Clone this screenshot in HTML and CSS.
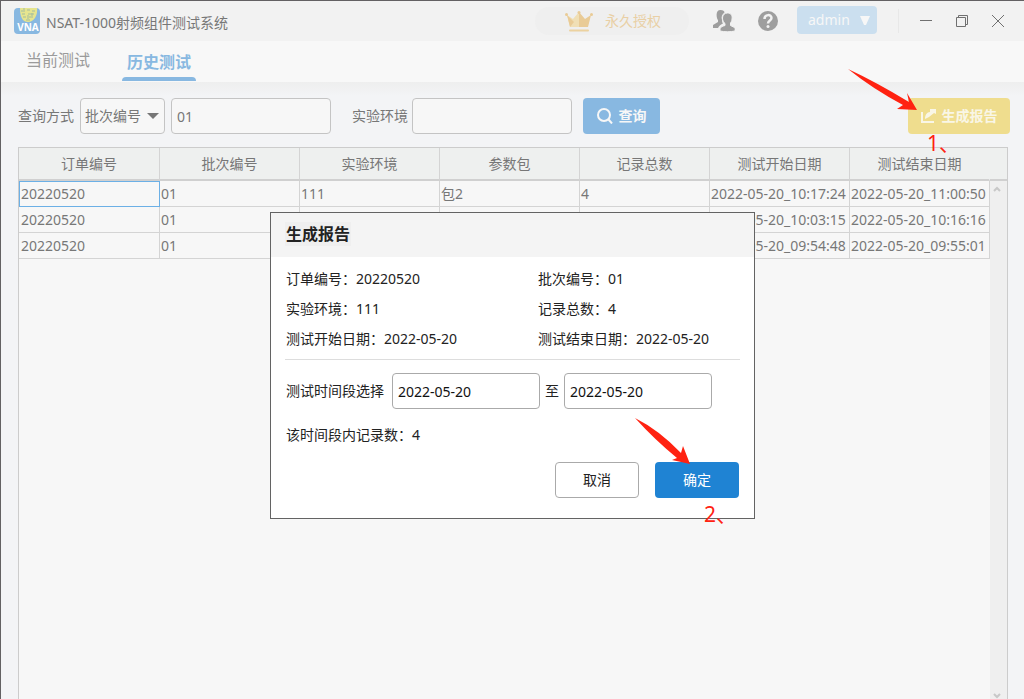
FILE: index.html
```html
<!DOCTYPE html>
<html lang="zh-CN">
<head>
<meta charset="utf-8">
<title>NSAT-1000射频组件测试系统</title>
<link rel="stylesheet" href="styles.css">
</head>
<body>
<div class="window">
  <header class="titlebar">
    <svg class="logo" width="26" height="26" viewBox="0 0 26 26" aria-hidden="true">
      <rect width="26" height="26" rx="4" fill="#88b8e1"/>
      <path d="M6 0h17c1 7-3 14-9 14S6 8 6 0z" fill="#e6e58f"/>
      <path d="M7 3h4M13 2h3M18 3h3M8 6h3M14 6h6M9 9h3M15 9h4M12 12h4M10 0v2M18 5v3M14 7v4" stroke="#a3bd9f" stroke-width="1" fill="none"/>
      <text class="logo-text" x="14" y="23" text-anchor="middle">VNA</text>
    </svg>
    <h1 class="app-name">NSAT-1000射频组件测试系统</h1>
    <div class="license">
      <svg width="28" height="21" viewBox="0 0 28 21" aria-hidden="true">
        <path d="M2 4l6 4 6-7v15H5z" fill="#f0dfb5"/>
        <path d="M26 4l-6 4-6-7v15h9z" fill="#e9cb96"/>
        <path d="M2 4l7 7-4 5z" fill="#e9cb96"/>
        <circle cx="1.500" cy="3.500" r="1.500" fill="#e9cb96"/><circle cx="14" cy="1.500" r="1.500" fill="#e9cb96"/><circle cx="26.500" cy="3.500" r="1.500" fill="#e9cb96"/>
        <path d="M5 19.500h18" stroke="#ecd2a0" stroke-width="2" stroke-linecap="round"/>
      </svg>
      <span>永久授权</span>
    </div>
    <button class="icon-button users" aria-label="用户">
      <svg width="22" height="22" viewBox="0 0 22 22" fill="#9e9e9e" aria-hidden="true">
        <path d="M7.500 0c2.500 0 4 1 4 2.500C9 4 8 7 9 10c0 2 .5 3 1 3.500-2 1-4 2-5 4.500H0v-3l5-3v-2C3.500 8.500 2 0 7.500 0z"/>
        <path d="M14.500 3c4 0 5 3 4.500 6 0 2-1 3-1.500 4v2.500l4 2c1 1 .5 3 .5 3.500-4 1-11 1-15 0 0-3 0-4 5-5.500v-2c-1.500-1-2.500-3-2.500-5.500 0-3 2-5 5-5z" stroke="#f2f2f2"/>
      </svg>
    </button>
    <button class="icon-button help" aria-label="帮助">
      <svg width="20" height="20" viewBox="0 0 20 20" aria-hidden="true">
        <circle cx="10" cy="10" r="10" fill="#9e9e9e"/>
        <path d="M6.500 8c0-5 7-5 7-1 0 2.500-3.500 2.500-3.500 5.500" fill="none" stroke="#f2f2f2" stroke-width="2.500"/>
        <circle cx="10" cy="15.500" r="1.500" fill="#f2f2f2"/>
      </svg>
    </button>
    <button class="account">admin
      <svg width="10" height="9" viewBox="0 0 10 9" fill="#f7f7f7" aria-hidden="true"><path d="M0 0h10L6 9H4z"/></svg>
    </button>
    <div class="window-controls">
      <button class="icon-button" aria-label="最小化"><svg width="12" height="12" viewBox="0 0 12 12" aria-hidden="true"><path d="M0 5.500h12"/></svg></button>
      <button class="icon-button" aria-label="还原"><svg width="12" height="12" viewBox="0 0 12 12" aria-hidden="true"><path d="M.5 2.500h9v9h-9zM2.500 2.500v-2h9v9h-2"/></svg></button>
      <button class="icon-button" aria-label="关闭"><svg width="12" height="12" viewBox="0 0 12 12" aria-hidden="true"><path d="M0 0l12 12M12 0L0 12"/></svg></button>
    </div>
  </header>

  <nav class="tabs">
    <button class="tab">当前测试</button>
    <button class="tab tab-active">历史测试</button>
  </nav>

  <main class="content">
    <form class="search">
      <label for="mode">查询方式</label>
      <div class="select-box">
        <select id="mode"><option>批次编号</option></select>
        <svg class="select-arrow" width="12" height="6" viewBox="0 0 12 6" aria-hidden="true"><path d="M0 0h12L6 6z" fill="#777"/></svg>
      </div>
      <input class="field keyword" type="text" value="01" aria-label="查询内容">
      <label for="env">实验环境</label>
      <input class="field environment" id="env" type="text">
      <button class="button query" type="button">
        <svg width="16" height="16" viewBox="0 0 16 16" fill="none" stroke="#f7f7f7" stroke-width="2" aria-hidden="true"><circle cx="7" cy="7" r="6"/><path d="M11.500 11.500L15 15.500"/></svg>
        查询
      </button>
      <div class="marked report-box">
        <button class="button report" type="button">
          <svg width="15" height="14" viewBox="0 0 15 14" aria-hidden="true"><path d="M1 3v10h12" fill="none" stroke="#f9f6e6" stroke-width="2"/><path d="M9 0h6v5l-2-1-5 4-4 2c0-4 2-7 5-7z" fill="#f9f6e6"/></svg>
          生成报告
        </button>
        <svg class="arrow arrow-report" width="69" height="43" viewBox="0 0 69 43" aria-hidden="true"><path d="M0 0Q28 13 61 33l-2-9 10 17-20-1 6-4Q25 20 0 0z" fill="#ff2211"/></svg>
        <span class="step step-report">1、</span>
      </div>
    </form>

    <section class="grid">
      <table>
        <colgroup><col class="first"><col class="wide"><col class="wide"><col class="wide"><col class="narrow"><col class="wide"><col class="wide"></colgroup>
        <thead>
          <tr><th>订单编号</th><th>批次编号</th><th>实验环境</th><th>参数包</th><th>记录总数</th><th>测试开始日期</th><th>测试结束日期</th></tr>
        </thead>
        <tbody>
          <tr><td class="selected">20220520</td><td>01</td><td>111</td><td>包2</td><td>4</td><td>2022-05-20_10:17:24</td><td>2022-05-20_11:00:50</td></tr>
          <tr><td>20220520</td><td>01</td><td></td><td></td><td></td><td>2022-05-20_10:03:15</td><td>2022-05-20_10:16:16</td></tr>
          <tr><td>20220520</td><td>01</td><td></td><td></td><td></td><td>2022-05-20_09:54:48</td><td>2022-05-20_09:55:01</td></tr>
        </tbody>
      </table>
      <div class="scroll-column">
        <div class="scroll-head"></div>
        <div class="scrollbar">
          <svg width="8" height="6" viewBox="0 0 8 6" aria-hidden="true"><path d="M1 5l3-3 3 3"/></svg>
          <svg width="8" height="6" viewBox="0 0 8 6" aria-hidden="true"><path d="M1 1l3 3 3-3"/></svg>
        </div>
      </div>
    </section>
  </main>

  <div class="overlay">
    <section class="dialog" role="dialog" aria-labelledby="dialog-title">
      <header class="dialog-head"><h2 id="dialog-title">生成报告</h2></header>
      <div class="dialog-body">
        <div class="facts">
          <span>订单编号：20220520</span><span>批次编号：01</span>
          <span>实验环境：111</span><span>记录总数：4</span>
          <span>测试开始日期：2022-05-20</span><span>测试结束日期：2022-05-20</span>
        </div>
        <div class="range">
          <label for="from">测试时间段选择</label>
          <input class="field date" id="from" type="text" value="2022-05-20">
          <label for="to">至</label>
          <input class="field date" id="to" type="text" value="2022-05-20">
        </div>
        <p class="count">该时间段内记录数：4</p>
        <div class="actions">
          <button class="button cancel" type="button">取消</button>
          <div class="marked">
            <button class="button confirm" type="button">确定</button>
            <svg class="arrow arrow-confirm" width="56" height="47" viewBox="0 0 56 47" aria-hidden="true"><path d="M0 0Q24 12 46 35l2-7 7 18-18-4 5-2Q20 22 0 0z" fill="#ff2211"/></svg>
            <span class="step step-confirm">2、</span>
          </div>
        </div>
      </div>
    </section>
  </div>
</div>
</body>
</html>
```
FILE: styles.css
```css
* { box-sizing: border-box; }

body, button, input, select {
  font-family: "Noto Sans", "Noto Sans CJK SC", sans-serif;
  font-size: 14px;
  line-height: 20px;
}

body { margin: 0; color: #777; }
h1, h2, p { margin: 0; }
button { padding: 0; border: 0; }
svg { display: block; flex: none; }

.window {
  position: relative;
  display: flex;
  flex-direction: column;
  height: 100vh;
  overflow: hidden;
  border: solid #636163;
  border-width: 1px 0 0 1px;
  background: #f3f4f6;
}

.titlebar {
  display: flex;
  align-items: center;
  height: 40px;
  padding: 0 20px 0 13px;
  background: #f2f2f2;
}
.logo-text { font: bold 10px "Noto Sans", sans-serif; fill: #fff; }
.app-name { margin: 4px auto 0 6px; font-size: 14px; font-weight: 400; }
.license {
  display: flex;
  align-items: center;
  gap: 12px;
  width: 154px;
  height: 28px;
  padding-left: 30px;
  border-radius: 14px;
  background: #efefef;
  color: #e9cfa5;
}
.icon-button { display: flex; align-items: center; background: none; }
.users { margin-left: 24px; }
.help { margin-left: 23px; }
.account {
  display: flex;
  align-items: center;
  justify-content: space-between;
  width: 80px;
  height: 28px;
  margin: 0 21px 2px 19px;
  padding: 0 7px 0 11px;
  border-radius: 4px;
  background: #cbdfef;
  color: #f7f7f7;
}
.window-controls {
  display: flex;
  align-items: center;
  gap: 24px;
  height: 24px;
  padding-left: 21px;
  border-left: 1px solid #e8e8e8;
}
.window-controls path { fill: none; stroke: #707070; }

.tabs {
  display: flex;
  gap: 22px;
  height: 41px;
  padding: 0 20px;
  background: #f8f8f8;
}
.tab {
  width: 74px;
  padding: 0 0 3px;
  background: none;
  color: #9b9b9b;
  font-size: 16px;
}
.tab-active {
  position: relative;
  margin-left: 5px;
  padding: 0;
  color: #88b8e1;
  font-weight: 700;
}
.tab-active::after {
  position: absolute;
  right: 0;
  bottom: 1px;
  left: 0;
  height: 4px;
  border-radius: 4px 4px 0 0;
  background: #88b8e1;
  content: "";
}

.content {
  display: flex;
  flex: 1;
  flex-direction: column;
  padding: 16px 16px 0 17px;
  background: linear-gradient(#eee, #f3f4f6 14px);
}

.search { display: flex; align-items: center; margin: 0 -2px 13px 0; }
.field, .select-box select {
  height: 36px;
  border: 1px solid #c4c4c4;
  border-radius: 4px;
  background: #f7f7f7;
  color: #777;
}
.field { padding: 0 5px; }
.select-box { position: relative; margin: 0 6px; }
.select-box select { display: block; width: 85px; padding: 0 4px; appearance: none; }
.select-arrow { position: absolute; top: 15px; right: 6px; pointer-events: none; }
.keyword { width: 160px; margin-right: 21px; }
.environment { width: 160px; margin: 0 11px 0 4px; }

.button {
  display: flex;
  align-items: center;
  justify-content: center;
  gap: 6px;
  height: 36px;
  border-radius: 4px;
}
.query { width: 77px; background: #88b8e1; color: #f7f7f7; font-weight: 700; }
.report { width: 102px; background: #efdd8e; color: #f9f6e6; font-weight: 700; }
.report-box { margin-left: auto; }

.marked { position: relative; }
.arrow, .step { position: absolute; z-index: 2; pointer-events: none; }
.arrow-report { top: -29px; right: 93px; }
.arrow-confirm { top: -44px; right: 48px; }
.step { color: #ff2211; font-size: 21px; line-height: 24px; white-space: nowrap; }
.step-report { top: 33px; left: 19px; }
.step-confirm { top: 40px; left: 49px; }

.grid {
  display: flex;
  flex: 1;
  border: solid #ccc;
  border-width: 1px 1px 0;
  background: #f7f7f7;
}
.grid table {
  flex: 1;
  align-self: flex-start;
  width: 0;
  border-collapse: separate;
  border-spacing: 0;
  table-layout: fixed;
}
.first { width: 141px; }
.wide { width: 140px; }
.narrow { width: 130px; }
.grid th {
  height: 33px;
  padding: 0;
  border-right: 1px solid #d4d4d4;
  border-bottom: 2px solid #d0d0d0;
  background: #eef0ef;
  font-weight: 400;
}
.grid th:last-child { border-right-color: #eef0ef; }
.grid td {
  height: 26px;
  padding: 1px 0 0 1px;
  border: solid #d4d4d4;
  border-width: 0 1px 1px 0;
  white-space: nowrap;
}
.grid td:first-child { padding-left: 2px; }
.grid .selected { outline: 1px solid #6cb0e6; outline-offset: -1px; }
.scroll-column { display: flex; flex-direction: column; width: 17px; }
.scroll-head { height: 33px; border-bottom: 2px solid #d0d0d0; background: #eef0ef; }
.scrollbar {
  display: flex;
  flex: 1;
  flex-direction: column;
  align-items: center;
  justify-content: space-between;
  padding: 5px 4px 0 0;
  background: #efefef;
}
.scrollbar path { fill: none; stroke: #c8c8c8; stroke-width: 2; }

.overlay {
  position: absolute;
  inset: 0;
  display: flex;
  align-items: center;
  justify-content: center;
  padding-top: 31px;
}
.dialog { width: 485px; border: 1px solid #636363; background: #fff; color: #222; }
.dialog-head { padding: 9px 14px 11px; background: #f4f4f4; }
.dialog-head h2 {
  width: max-content;
  padding: 0 1px;
  background: #efefef;
  font-size: 16px;
  line-height: 24px;
}
.dialog-body { padding: 7px 14px 20px; }
.facts {
  display: grid;
  grid-template-columns: 252px 1fr;
  padding: 0 1px 5px;
  border-bottom: 1px solid #ddd;
  line-height: 30px;
}
.range { display: flex; align-items: center; padding: 13px 1px 16px; }
.range .field { background: #fff; border-color: #aaa; color: #111; }
.range label + .date { margin: 0 5px 0 8px; }
.range .date + label + .date { margin: 0 0 0 5px; }
.date { width: 148px; }
.count { padding: 0 1px 17px; }
.actions { display: flex; justify-content: flex-end; gap: 16px; padding-right: 1px; }
.cancel, .confirm { width: 84px; }
.cancel { border: 1px solid #aaa; background: #fff; color: #222; }
.confirm { background: #1f83d3; color: #fff; }
```
